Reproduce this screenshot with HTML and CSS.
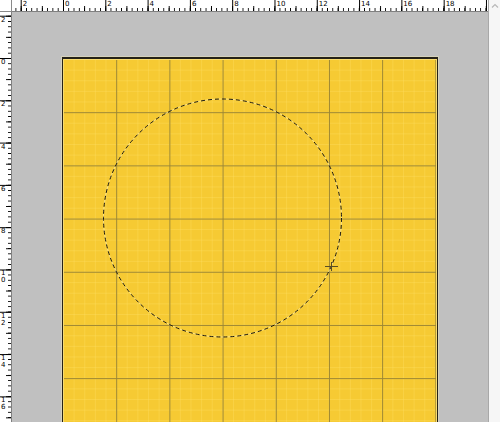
FILE: index.html
```html
<!DOCTYPE html>
<html>
<head>
<meta charset="utf-8">
<link rel="stylesheet" href="styles.css">
</head>
<body>
<div class="app">
  <div class="main">
    <div class="toprow">
      <div class="corner"></div>
      <div class="hruler">
        <div class="hlabels">
          <span>2</span><span>0</span><span>2</span><span>4</span><span>6</span><span>8</span><span>10</span><span>12</span><span>14</span><span>16</span><span>18</span>
        </div>
      </div>
    </div>
    <div class="body">
      <div class="vruler">
        <div class="vlabels">
          <span>2</span><span>0</span><span>2</span><span>4</span><span>6</span><span>8</span><span>1<br>0</span><span>1<br>2</span><span>1<br>4</span><span>1<br>6</span>
        </div>
      </div>
      <div class="workspace">
        <div class="canvas">
          <svg class="overlay" width="374" height="370" viewBox="0 0 374 370">
            <circle cx="159.5" cy="159" r="119" fill="none" stroke="#fff4c0" stroke-opacity="0.6" stroke-width="1" stroke-dasharray="4 3" stroke-dashoffset="4"/>
            <circle cx="159.5" cy="159" r="119" fill="none" stroke="#1c1a12" stroke-width="1" stroke-dasharray="4 3"/>
            <path d="M262 207.5 H275 M268.5 203 V212" stroke="#5a4e24" stroke-width="1" fill="none"/>
          </svg>
        </div>
      </div>
    </div>
  </div>
  <div class="scrollbar">
    <svg class="arrow" width="12" height="12" viewBox="0 0 12 12">
      <path d="M3 7.5 L6 4.5 L9 7.5" stroke="#b8b8b8" stroke-width="1.2" fill="none"/>
    </svg>
  </div>
</div>
</body>
</html>
```
FILE: styles.css
```css
html, body {
  margin: 0;
  padding: 0;
  width: 500px;
  height: 422px;
  overflow: hidden;
  background: #c0c0c0;
}
.app {
  display: flex;
  width: 500px;
  height: 422px;
}
.main {
  display: flex;
  flex-direction: column;
  width: 488px;
  height: 422px;
}
.toprow {
  display: flex;
  height: 12px;
  flex: none;
}
.corner {
  width: 12px;
  height: 12px;
  box-sizing: border-box;
  background: #fff;
  border-right: 1px solid #8a8a8a;
  border-bottom: 1px solid #8a8a8a;
}
.hruler {
  width: 476px;
  height: 12px;
  box-sizing: border-box;
  background-color: #fff;
  border-bottom: 1px solid #808080;
  background-image:
    linear-gradient(to right, #000 1px, transparent 1px),
    linear-gradient(to right, #000 1px, transparent 1px),
    linear-gradient(to right, #000 1px, transparent 1px);
  background-size: 5.2875px 3px, 21.15px 5px, 42.3px 11px;
  background-repeat: repeat-x;
  background-position: 51px 100%, 51px 100%, 51px 0;
  overflow: hidden;
}
.hlabels {
  display: flex;
  margin-left: 10.7px;
  font-family: "DejaVu Sans", sans-serif;
  font-size: 7px;
  line-height: 8px;
  color: #000;
}
.hlabels span {
  flex: none;
  width: 42.3px;
}
.body {
  display: flex;
  flex: 1;
  min-height: 0;
}
.vruler {
  width: 12px;
  flex: none;
  box-sizing: border-box;
  background-color: #fff;
  border-right: 1px solid #808080;
  background-image:
    linear-gradient(to bottom, #000 1px, transparent 1px),
    linear-gradient(to bottom, #000 1px, transparent 1px),
    linear-gradient(to bottom, #000 1px, transparent 1px);
  background-size: 3px 5.2875px, 5px 21.15px, 11px 42.3px;
  background-repeat: repeat-y;
  background-position: 100% 46px, 100% 46px, 0 46px;
  overflow: hidden;
}
.vlabels {
  display: flex;
  flex-direction: column;
  margin-top: 4.7px;
  font-family: "DejaVu Sans", sans-serif;
  font-size: 7px;
  line-height: 7px;
  color: #000;
}
.vlabels span {
  flex: none;
  height: 42.3px;
  padding-left: 1px;
  box-sizing: border-box;
}
.workspace {
  flex: 1;
  background: #c0c0c0;
  padding: 46px 0 0 50px;
  overflow: hidden;
}
.canvas {
  position: relative;
  width: 374px;
  height: 370px;
  border: 1px solid #262218;
  border-top: 2px solid #262218;
  border-bottom: none;
  margin-top: -1px;
  box-shadow: 0 0 0 1px #d6d2bc, inset 0 0 0 1px #f8dc70;
  background-color: #f6ca33;
  background-image:
    linear-gradient(to right, #9c8632 1px, transparent 1px),
    linear-gradient(to bottom, #9c8632 1px, transparent 1px),
    linear-gradient(to right, rgba(255, 224, 100, 0.35) 1px, transparent 1px),
    linear-gradient(to bottom, rgba(255, 224, 100, 0.35) 1px, transparent 1px);
  background-size: 53.2px 100%, 100% 53.2px, 10.64px 100%, 100% 10.64px;
  background-position: 0 0, 0 0, 0 0, 0 0;
}
.overlay {
  position: absolute;
  left: 0;
  top: 0;
  display: block;
}
.scrollbar {
  width: 12px;
  height: 422px;
  box-sizing: border-box;
  background: #f6f6f6;
  border-left: 1px solid #a8a8a8;
}
.arrow {
  display: block;
}
```
